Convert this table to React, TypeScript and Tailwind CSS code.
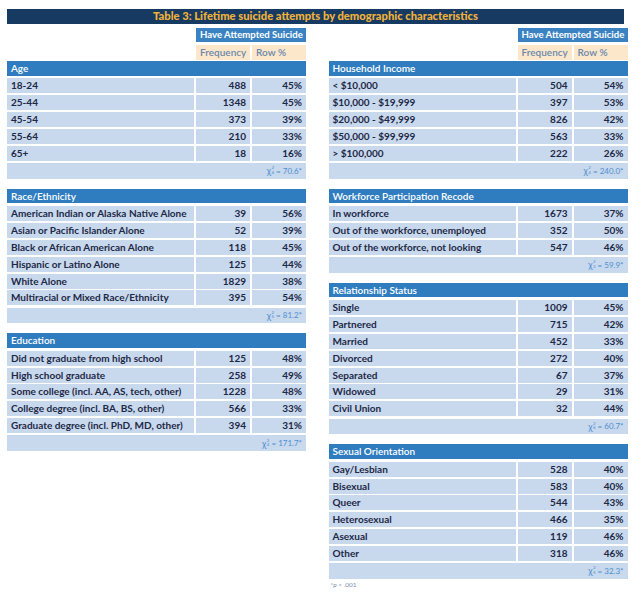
type Row = [string, string, string];

interface Section {
  title: string;
  rows: Row[];
  chi: string;
  df: string;
}

const leftSections: Section[] = [
  {
    title: 'Age',
    rows: [
      ['18-24', '488', '45%'],
      ['25-44', '1348', '45%'],
      ['45-54', '373', '39%'],
      ['55-64', '210', '33%'],
      ['65+', '18', '16%'],
    ],
    chi: '70.6',
    df: '4',
  },
  {
    title: 'Race/Ethnicity',
    rows: [
      ['American Indian or Alaska Native Alone', '39', '56%'],
      ['Asian or Pacific Islander Alone', '52', '39%'],
      ['Black or African American Alone', '118', '45%'],
      ['Hispanic or Latino Alone', '125', '44%'],
      ['White Alone', '1829', '38%'],
      ['Multiracial or Mixed Race/Ethnicity', '395', '54%'],
    ],
    chi: '81.2',
    df: '5',
  },
  {
    title: 'Education',
    rows: [
      ['Did not graduate from high school', '125', '48%'],
      ['High school graduate', '258', '49%'],
      ['Some college (incl. AA, AS, tech, other)', '1228', '48%'],
      ['College degree (incl. BA, BS, other)', '566', '33%'],
      ['Graduate degree (incl. PhD, MD, other)', '394', '31%'],
    ],
    chi: '171.7',
    df: '4',
  },
];

const rightSections: Section[] = [
  {
    title: 'Household Income',
    rows: [
      ['< $10,000', '504', '54%'],
      ['$10,000 - $19,999', '397', '53%'],
      ['$20,000 - $49,999', '826', '42%'],
      ['$50,000 - $99,999', '563', '33%'],
      ['> $100,000', '222', '26%'],
    ],
    chi: '240.0',
    df: '4',
  },
  {
    title: 'Workforce Participation Recode',
    rows: [
      ['In workforce', '1673', '37%'],
      ['Out of the workforce, unemployed', '352', '50%'],
      ['Out of the workforce, not looking', '547', '46%'],
    ],
    chi: '59.9',
    df: '2',
  },
  {
    title: 'Relationship Status',
    rows: [
      ['Single', '1009', '45%'],
      ['Partnered', '715', '42%'],
      ['Married', '452', '33%'],
      ['Divorced', '272', '40%'],
      ['Separated', '67', '37%'],
      ['Widowed', '29', '31%'],
      ['Civil Union', '32', '44%'],
    ],
    chi: '60.7',
    df: '6',
  },
  {
    title: 'Sexual Orientation',
    rows: [
      ['Gay/Lesbian', '528', '40%'],
      ['Bisexual', '583', '40%'],
      ['Queer', '544', '43%'],
      ['Heterosexual', '466', '35%'],
      ['Asexual', '119', '46%'],
      ['Other', '318', '46%'],
    ],
    chi: '32.3',
    df: '5',
  },
];

function ChiSquare({ value, df }: { value: string; df: string }) {
  return (
    <span className="flex items-center text-[8px] leading-none text-[#4f8fcf]">
      <span className="text-[9px]">χ</span>
      <span className="flex flex-col text-[4.5px] leading-[4.5px] mr-[2px] ml-[0.5px]">
        <span>2</span>
        <span>{df}</span>
      </span>
      <span>= {value}*</span>
    </span>
  );
}

function TableSection({ section }: { section: Section }) {
  return (
    <div className="flex flex-col gap-[2.85px] mb-[10.3px]">
      <div className="h-[14.5px] bg-[#2f7dbf] text-white flex items-center pl-[4px] text-[10px] font-semibold">
        {section.title}
      </div>
      {section.rows.map(([label, freq, pct]) => (
        <div key={label} className="grid grid-cols-[187px_54px_54px] gap-x-[2px] h-[14px] text-[10px] font-bold text-[#1d2846]">
          <div className="bg-[#c8d8ed] flex items-center pl-[4px] whitespace-nowrap">{label}</div>
          <div className="bg-[#c8d8ed] flex items-center justify-end pr-[4px]">{freq}</div>
          <div className="bg-[#c8d8ed] flex items-center justify-end pr-[4px]">{pct}</div>
        </div>
      ))}
      <div className="h-[15.5px] mt-[0.45px] bg-[#c8d8ed] flex items-center justify-end pr-[4px]">
        <ChiSquare value={section.chi} df={section.df} />
      </div>
    </div>
  );
}

function Column({ sections, footnote }: { sections: Section[]; footnote?: boolean }) {
  return (
    <div className="w-[299px] flex flex-col">
      <div className="grid grid-cols-[187px_54px_54px] gap-x-[2px]">
        <div className="col-start-2 col-span-2 h-[14px] bg-[#3a82c2] text-white flex items-center pl-[4px] text-[9.6px] font-bold whitespace-nowrap overflow-hidden">
          Have Attempted Suicide
        </div>
      </div>
      <div className="grid grid-cols-[187px_54px_54px] gap-x-[2px] mt-[3px] mb-[2px] h-[14px] text-[10px] font-semibold text-[#6a88ad]">
        <div />
        <div className="bg-[#fce7cb] flex items-center pl-[4px]">Frequency</div>
        <div className="bg-[#fce7cb] flex items-center pl-[4px]">Row %</div>
      </div>
      {sections.map((s) => (
        <TableSection key={s.title} section={s} />
      ))}
      {footnote && (
        <div className="-mt-[7px] pl-[2px] text-[6.5px] text-[#7890ad] leading-none">
          *<span className="italic">p</span> &lt; .001
        </div>
      )}
    </div>
  );
}

export default function App() {
  return (
    <div className="w-[638px] h-[599px] bg-white pt-[9px] pl-[7px] font-['Lato',sans-serif]">
      <div className="w-[617px] h-[15px] bg-[#173a62] flex items-center justify-center text-[11.2px] font-black text-[#f1b23a] whitespace-nowrap">
        Table 3: Lifetime suicide attempts by demographic characteristics
      </div>
      <div className="flex gap-[22.5px] mt-[4px]">
        <Column sections={leftSections} />
        <Column sections={rightSections} footnote />
      </div>
    </div>
  );
}
